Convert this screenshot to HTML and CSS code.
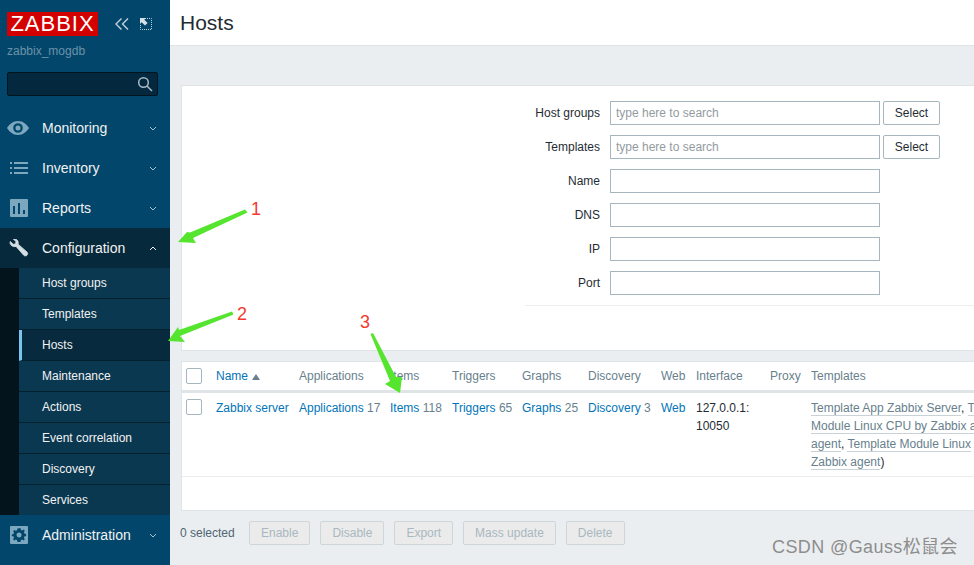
FILE: index.html
```html
<!DOCTYPE html>
<html lang="en">
<head>
<meta charset="utf-8">
<title>Hosts</title>
<link rel="stylesheet" href="styles.css">
</head>
<body>
<div class="app">
  <aside class="sidebar">
    <div class="brand">
      <span class="logo">ZABBIX</span>
      <svg class="brand-icon collapse" viewBox="0 0 14 12"><path d="M6.500.5 1 6l5.500 5.500M13 .5 7.500 6l5.500 5.500"/></svg>
      <svg class="brand-icon expand" viewBox="0 0 12 12"><path class="dots" d="M5 .5h6.500v11H.5V6"/><path class="solid" d="M0 0h6L4.300 1.700 7.600 5 5 7.600 1.700 4.300 0 6z"/></svg>
    </div>
    <div class="server">zabbix_mogdb</div>
    <div class="search">
      <svg viewBox="0 0 16 16"><circle cx="6.500" cy="6.500" r="4.800"/><path d="m10 10 5 5"/></svg>
    </div>
    <nav class="menu">
      <a class="menu-item">
        <span class="menu-icon"><svg viewBox="0 0 22 16"><path class="fill" fill-rule="evenodd" d="M11 1C6 1 2 4.500 0 8c2 3.500 6 7 11 7s9-3.500 11-7c-2-3.500-6-7-11-7Zm0 2.200a4.800 4.800 0 1 1 0 9.600 4.800 4.800 0 0 1 0-9.600Zm0 2.300a2.500 2.500 0 1 0 0 5 2.500 2.500 0 0 0 0-5Z"/></svg></span>
        <span class="menu-label">Monitoring</span>
        <svg class="chev" viewBox="0 0 8 5"><path d="m1 1 3 3 3-3"/></svg>
      </a>
      <a class="menu-item">
        <span class="menu-icon"><svg viewBox="0 0 22 16"><path class="fill" d="M3 2h2v2H3zM7 2h14v2H7zM3 7h2v2H3zM7 7h14v2H7zM3 12h2v2H3zM7 12h14v2H7z"/></svg></span>
        <span class="menu-label">Inventory</span>
        <svg class="chev" viewBox="0 0 8 5"><path d="m1 1 3 3 3-3"/></svg>
      </a>
      <a class="menu-item">
        <span class="menu-icon"><svg viewBox="0 0 22 18"><path class="fill" fill-rule="evenodd" d="M4 0h16a1 1 0 0 1 1 1v16a1 1 0 0 1-1 1H4a1 1 0 0 1-1-1V1a1 1 0 0 1 1-1Zm2 7v8h2V7Zm5-3v11h2V4Zm5 7v4h2v-4Z"/></svg></span>
        <span class="menu-label">Reports</span>
        <svg class="chev" viewBox="0 0 8 5"><path d="m1 1 3 3 3-3"/></svg>
      </a>
      <a class="menu-item open">
        <span class="menu-icon"><svg viewBox="0 0 22 18"><path class="fill wrench" d="M3.300 2.500 6.200 5.300l2.300-.4.500-2.300L6.300.1c2.400-.6 4.800.9 5 3.500 0 .6 0 1.100-.2 1.600l8.800 7.700c1 1 1 2.400.1 3.300-.9.900-2.400 1-3.300 0L9 7.400c-2.800.9-6-1-6-3.800 0-.4.100-.8.300-1.100Z"/></svg></span>
        <span class="menu-label">Configuration</span>
        <svg class="chev" viewBox="0 0 8 5"><path d="m1 4 3-3 3 3"/></svg>
      </a>
      <div class="submenu">
        <a class="sub-item">Host groups</a>
        <a class="sub-item">Templates</a>
        <a class="sub-item active">Hosts</a>
        <a class="sub-item">Maintenance</a>
        <a class="sub-item">Actions</a>
        <a class="sub-item">Event correlation</a>
        <a class="sub-item">Discovery</a>
        <a class="sub-item">Services</a>
      </div>
      <a class="menu-item">
        <span class="menu-icon"><svg viewBox="0 0 22 18"><path class="fill" fill-rule="evenodd" d="M4 0h16a1 1 0 0 1 1 1v16a1 1 0 0 1-1 1H4a1 1 0 0 1-1-1V1a1 1 0 0 1 1-1Zm6.500 2.500-.4 1.700-1.300.6-1.500-.9-1.200 1.300.9 1.400-.5 1.400-1.700.4v1.600l1.700.4.500 1.400-.9 1.400 1.200 1.300 1.500-.9 1.300.6.400 1.700h2.900l.4-1.700 1.300-.6 1.500.9 1.200-1.300-.9-1.400.5-1.400 1.700-.4V8l-1.700-.4-.5-1.400.9-1.400-1.200-1.300-1.500.9-1.300-.6-.4-1.700ZM12 6.500a2.500 2.500 0 1 1 0 5 2.500 2.500 0 0 1 0-5Z"/></svg></span>
        <span class="menu-label">Administration</span>
        <svg class="chev" viewBox="0 0 8 5"><path d="m1 1 3 3 3-3"/></svg>
      </a>
    </nav>
  </aside>

  <main class="main">
    <header class="page-head"><h1>Hosts</h1></header>
    <div class="content">
      <section class="filter panel">
        <form class="filter-form">
          <label>Host groups</label><input class="field" placeholder="type here to search"><button type="button" class="select">Select</button>
          <label>Templates</label><input class="field" placeholder="type here to search"><button type="button" class="select">Select</button>
          <label>Name</label><input class="field"><span></span>
          <label>DNS</label><input class="field"><span></span>
          <label>IP</label><input class="field"><span></span>
          <label>Port</label><input class="field"><span></span>
        </form>
        <div class="filter-rule"></div>
      </section>

      <section class="list panel">
        <table class="hosts">
          <colgroup>
            <col class="c-check"><col class="c-name"><col class="c-apps"><col class="c-items"><col class="c-trig"><col class="c-graph"><col class="c-disc"><col class="c-web"><col class="c-if"><col class="c-proxy"><col class="c-tpl">
          </colgroup>
          <thead>
            <tr>
              <th><span class="check"></span></th>
              <th class="sorted"><a>Name</a><span class="sort-up"></span></th>
              <th>Applications</th><th>Items</th><th>Triggers</th><th>Graphs</th><th>Discovery</th><th>Web</th><th>Interface</th><th>Proxy</th><th>Templates</th>
            </tr>
          </thead>
          <tbody>
            <tr>
              <td><span class="check"></span></td>
              <td><a>Zabbix server</a></td>
              <td><a>Applications</a> <span class="count">17</span></td>
              <td><a>Items</a> <span class="count">118</span></td>
              <td><a>Triggers</a> <span class="count">65</span></td>
              <td><a>Graphs</a> <span class="count">25</span></td>
              <td><a>Discovery</a> <span class="count">3</span></td>
              <td><a>Web</a></td>
              <td>127.0.0.1:<br>10050</td>
              <td></td>
              <td class="templates"><div class="tpl-wrap"><a class="tpl">Template App Zabbix Server</a>, <a class="tpl">T</a><br><a class="tpl">Module Linux CPU by Zabbix a</a><br><a class="tpl">agent</a>, <a class="tpl">Template Module Linux</a><br><a class="tpl">Zabbix agent</a>)</div></td>
            </tr>
          </tbody>
        </table>
      </section>

      <footer class="actions">
        <span class="selected">0 selected</span>
        <button type="button" disabled>Enable</button>
        <button type="button" disabled>Disable</button>
        <button type="button" disabled>Export</button>
        <button type="button" disabled>Mass update</button>
        <button type="button" disabled>Delete</button>
      </footer>
    </div>
  </main>
</div>

<svg class="arrows" viewBox="0 0 974 565">
  <polygon points="245,209.500 247.500,212.500 193,238 196,243 178,242 187,232 190,232.500"/>
  <polygon points="232,311.500 233.500,314.500 180,336 185,342 168,341 178,327 179,330"/>
  <polygon points="370.500,334 373,333 396,377 402,377 400,393 385,384 390,381"/>
</svg>
<span class="note n1">1</span>
<span class="note n2">2</span>
<span class="note n3">3</span>
<span class="watermark">CSDN @Gauss松鼠会</span>
</body>
</html>
```
FILE: styles.css
```css
* { box-sizing: border-box; }
html, body { margin: 0; height: 565px; overflow: hidden; }
body { font: 12px/14px "Liberation Sans", Arial, sans-serif; color: #1f2c33; background: #ebeef0; }
a { color: #0275b8; }

.app { display: flex; width: 974px; height: 565px; }

.sidebar { width: 170px; flex: none; background: #03466b; color: #f2f2f2; }
.brand { display: flex; align-items: center; height: 48px; padding: 12px 0 12px 7px; }
.logo { width: 91px; height: 24px; background: #d40000; color: #fff; font: 22px/24px "Liberation Sans", sans-serif; letter-spacing: 1px; text-align: center; }
.brand-icon { fill: none; stroke: #c3d3dc; }
.collapse { width: 14px; height: 12px; margin-left: 17px; stroke-width: 1.400; }
.expand { width: 12px; height: 12px; margin-left: 11px; }
.expand .dots { stroke-dasharray: 1 1; stroke-width: 1; }
.expand .solid { fill: #d5e0e6; stroke: none; }
.server { margin-top: -4px; padding-left: 7px; height: 28px; color: #6b93a8; font-size: 12px; }
.search { display: flex; align-items: center; justify-content: flex-end; width: 151px; height: 24px; margin: 0 0 0 7px; padding-right: 4px; background: #04293e; border: 1px solid #01151f; border-radius: 2px; }
.search svg { width: 16px; height: 16px; fill: none; stroke: #a7bcc8; stroke-width: 1.500; }

.menu { margin-top: 12px; }
.menu-item { display: flex; align-items: center; height: 40px; padding-left: 7px; color: #f2f2f2; font-size: 14px; }
.menu-icon { width: 35px; flex: none; display: flex; }
.menu-icon svg { width: 22px; height: 18px; }
.menu-icon .fill { fill: #7ba7bf; }
.menu-label { flex: 1; }
.chev { width: 8px; height: 5px; margin-right: 13px; fill: none; stroke: #a9c0cd; stroke-width: 1; }
.open { background: #07293c; }
.open .fill { fill: #d4dee4; }
.open .wrench { stroke: #d4dee4; stroke-width: .8; }
.open .chev { stroke: #eef2f4; }
.submenu { padding-left: 19px; background: #03141c; }
.sub-item { display: block; height: 31px; padding: 8px 0 0 23px; background: #0a3850; border-bottom: 1px solid #03202f; color: #f2f2f2; font-size: 12px; }
.sub-item:last-child { border-bottom: 0; height: 30px; }
.active { padding-left: 20px; background: #072a3e; border-left: 3px solid #79c5f2; }

.main { flex: 1; min-width: 0; overflow: hidden; }
.page-head { height: 46px; background: #fff; border-bottom: 1px solid #dfe4e7; padding-left: 10px; }
h1 { margin: 0; font-size: 21px; font-weight: 400; line-height: 45px; color: #1f2c33; }
.content { padding: 39px 0 0 11px; }
.panel { background: #fff; border: 1px solid #dfe4e7; border-right: 0; }

.filter { height: 266px; padding-top: 15px; }
.filter-form { display: grid; grid-template-columns: 428px 270px 60px; grid-auto-rows: 24px; gap: 10px 0; align-items: center; }
.filter-form label { text-align: right; padding-right: 10px; color: #1f2c33; }
.field { width: 270px; height: 24px; padding: 0 5px; border: 1px solid #a5b6be; background: #fff; font: 12px "Liberation Sans", Arial, sans-serif; outline: 0; border-radius: 0; }
.field::placeholder { color: #939ba0; opacity: 1; }
.select { width: 57px; height: 24px; margin-left: 3px; padding: 0; background: #fff; border: 1px solid #a5b6be; border-radius: 2px; color: #1f2c33; font: 12px "Liberation Sans", Arial, sans-serif; }
.filter-rule { height: 1px; margin: 10px 0 0 343px; background: #ebeef0; }

.list { height: 150px; margin-top: 10px; overflow: hidden; }
.hosts { table-layout: fixed; border-collapse: collapse; width: 845px; }
.c-check { width: 29px; } .c-name { width: 83px; } .c-apps { width: 91px; } .c-items { width: 62px; }
.c-trig { width: 70px; } .c-graph { width: 66px; } .c-disc { width: 73px; } .c-web { width: 35px; }
.c-if { width: 74px; } .c-proxy { width: 41px; } .c-tpl { width: 221px; }
th { height: 29px; padding: 0 0 0 5px; text-align: left; font-weight: 400; color: #687f8d; border-bottom: 3px solid #dfe4e7; white-space: nowrap; }
th:first-child, td:first-child { padding-left: 4px; }
td { padding: 6px 0 4px 5px; height: 85px; vertical-align: top; line-height: 18px; border-bottom: 1px solid #ebeef0; white-space: nowrap; }
.count { color: #687f8d; }
.check { display: block; width: 16px; height: 16px; background: #fff; border: 1px solid #a5b6be; border-radius: 2px; }
.sort-up { display: inline-block; width: 0; height: 0; margin-left: 4px; border: 4px solid transparent; border-top: 0; border-bottom: 6px solid #687f8d; }
.tpl { color: #687f8d; border-bottom: 1px solid #c9d2d7; }
.tpl-wrap { width: 163px; overflow: hidden; }

.actions { display: flex; align-items: center; gap: 10px; height: 44px; margin-left: -1px; color: #4f6573; }
.selected { width: 59px; }
.actions button { height: 24px; padding: 0 11px; background: #ebebeb; border: 1px solid #cdd6db; border-radius: 2px; color: #a9b8c0; font: 12px "Liberation Sans", Arial, sans-serif; }

.arrows { position: absolute; left: 0; top: 0; width: 974px; height: 565px; pointer-events: none; }
.arrows polygon { fill: #55e52e; }
.note { position: absolute; color: #f23a30; font-size: 18px; line-height: 20px; }
.n1 { left: 251px; top: 199px; }
.n2 { left: 237px; top: 304px; }
.n3 { left: 360px; top: 312px; }
.watermark { position: absolute; left: 772px; top: 536px; color: #7d7d7d; font: 18px/22px "Liberation Sans", "Noto Sans CJK SC", sans-serif; letter-spacing: .4px; opacity: .85; }
```
